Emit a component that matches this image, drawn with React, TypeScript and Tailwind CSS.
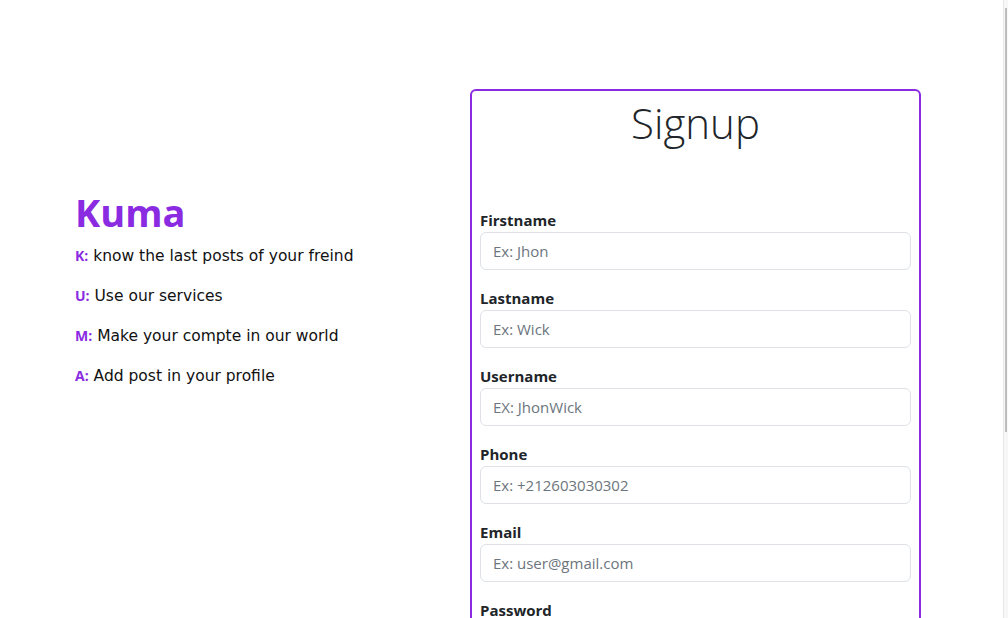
import React from "react";

const fields = [
  { label: "Firstname", ph: "Ex: Jhon" },
  { label: "Lastname", ph: "Ex: Wick" },
  { label: "Username", ph: "EX: JhonWick" },
  { label: "Phone", ph: "Ex: +212603030302" },
  { label: "Email", ph: "Ex: user@gmail.com" },
  { label: "Password", ph: "Password" },
];

const items = [
  { k: "K:", t: "know the last posts of your freind" },
  { k: "U:", t: "Use our services" },
  { k: "M:", t: "Make your compte in our world" },
  { k: "A:", t: "Add post in your profile" },
];

export default function App() {
  return (
    <div className="flex h-[618px] w-[1008px] overflow-hidden bg-white">
      <div className="flex flex-1 pt-[89px]">
        <div className="w-[470px] pl-[75px] pt-[103px]">
          <h1 className="text-[38px] font-bold leading-[40px] text-[#8a2be2] [font-family:'Open_Sans',sans-serif]">
            Kuma
          </h1>
          <div className="mt-[9px] flex flex-col [font-family:'DejaVu_Sans',sans-serif]">
            {items.map((it) => (
              <p key={it.k} className="h-[40px] leading-[30px] text-[15.5px] text-[#111]">
                <span className="text-[14px] font-bold text-[#8a2be2] [font-family:'Open_Sans',sans-serif]">{it.k}</span> {it.t}
              </p>
            ))}
          </div>
        </div>
        <div className="w-[451px] self-start rounded-[6px] border-2 border-[#8a2be2] px-[8px] pb-4 [font-family:'Open_Sans',sans-serif]">
          <h2 className="mt-[0px] h-[117px] text-center text-[42px] font-light leading-[64px] text-[#212529]">
            Signup
          </h2>
          <div className="flex flex-col gap-[16px]">
            {fields.map((f) => (
              <div key={f.label} className="flex flex-col">
                <label className="h-[24px] text-[15px] font-bold leading-[24px] text-[#212529]">
                  {f.label}
                </label>
                <input
                  placeholder={f.ph}
                  className="h-[38px] w-full rounded-[6px] border border-[#dee2e6] px-[12px] text-[15px] text-[#212529] outline-none placeholder:text-[#6c757d]"
                />
              </div>
            ))}
          </div>
        </div>
      </div>
      <div className="flex w-[5px] justify-center border-l border-[#e8e8e8] bg-[#f7f7f7]">
        <div className="mt-[8px] h-[424px] w-[2px] bg-[#bdbdbd]" />
      </div>
    </div>
  );
}
